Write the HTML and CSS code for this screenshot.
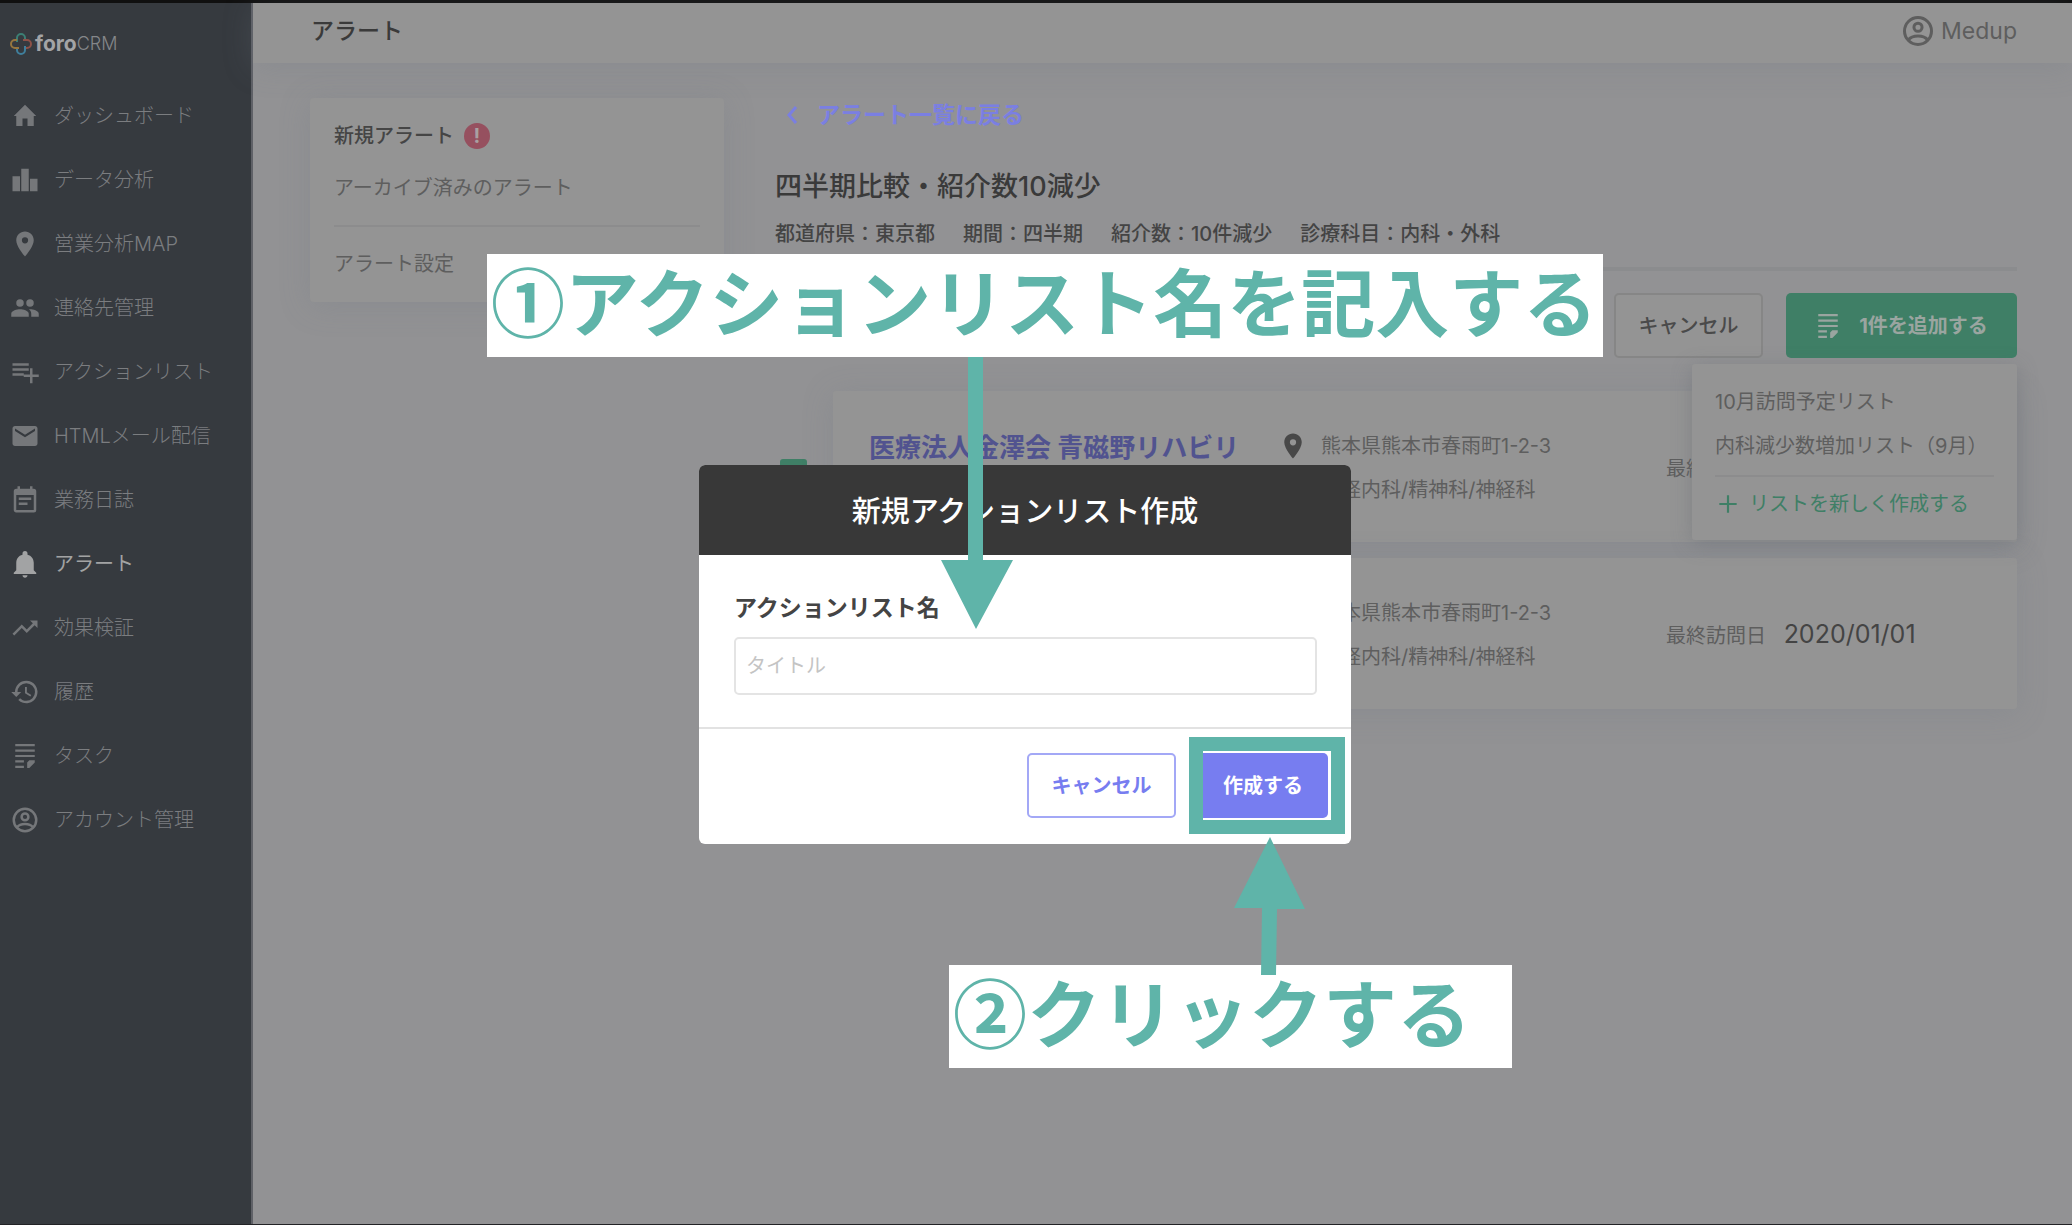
FILE: index.html
```html
<!DOCTYPE html>
<html lang="ja">
<head>
    <meta charset="UTF-8">
    <meta name="viewport" content="width=device-width, initial-scale=1.0">
    <title>アラート - foro CRM</title>
    <link rel="stylesheet" href="styles.css">
</head>
<body>
    <svg class="defs" aria-hidden="true">
        <symbol id="i-home" viewBox="0 0 24 24"><path d="M10 20v-6h4v6h5v-8h2L12 3 3 12h2v8z"/></symbol>
        <symbol id="i-chart" viewBox="0 0 24 24"><path d="M2 9h6v12H2zM9 3h6v18H9zM16 11h6v10h-6z"/></symbol>
        <symbol id="i-pin" viewBox="0 0 24 24"><path d="M12 2C8.13 2 5 5.13 5 9c0 5.25 7 13 7 13s7-7.75 7-13c0-3.87-3.13-7-7-7zm0 9.500a2.500 2.500 0 0 1 0-5 2.500 2.500 0 0 1 0 5z"/></symbol>
        <symbol id="i-people" viewBox="0 0 24 24"><path d="M16 11a3 3 0 1 0 0-6 3 3 0 0 0 0 6zM8 11a3 3 0 1 0 0-6 3 3 0 0 0 0 6zm0 2c-2.330 0-7 1.170-7 3.500V19h14v-2.500C15 14.170 10.330 13 8 13zm8 0c-.29 0-.62.02-.97.05 1.160.84 1.970 1.970 1.970 3.450V19h6v-2.500c0-2.330-4.670-3.500-7-3.500z"/></symbol>
        <symbol id="i-listadd" viewBox="0 0 24 24"><path d="M2 5h13v2H2zM2 9h13v2H2zM2 13h9v2H2zM16 9h2v5h5v2h-5v5h-2v-5h-5v-2h5z"/></symbol>
        <symbol id="i-mail" viewBox="0 0 24 24"><path d="M20 4H4c-1.100 0-2 .9-2 2v12c0 1.100.9 2 2 2h16c1.100 0 2-.9 2-2V6c0-1.100-.9-2-2-2zm0 4l-8 5-8-5V6l8 5 8-5v2z"/></symbol>
        <symbol id="i-note" viewBox="0 0 24 24"><path d="M19 3h-1V1h-2v2H8V1H6v2H5a2 2 0 0 0-2 2v15c0 1.100.9 2 2 2h14a2 2 0 0 0 2-2V5a2 2 0 0 0-2-2zm0 17H5V8h14zM7 10h10v2H7zM7 14h7v2H7z"/></symbol>
        <symbol id="i-bell" viewBox="0 0 24 24"><path d="M12 23c1.100 0 2-.9 2-2h-4c0 1.100.9 2 2 2zm7-6v-6c0-3.200-1.800-5.800-5-6.500V3.500a2 2 0 0 0-4 0v1C6.800 5.200 5 7.800 5 11v6l-2 2v1h18v-1z"/></symbol>
        <symbol id="i-trend" viewBox="0 0 24 24"><path d="M16 6l2.290 2.290-4.880 4.880-4-4L2 16.590 3.410 18l6-6 4 4 6.300-6.290L22 12V6z"/></symbol>
        <symbol id="i-history" viewBox="0 0 24 24"><path d="M13 3a9 9 0 0 0-9 9H1l4 4 4-4H6a7 7 0 1 1 7 7c-1.930 0-3.680-.79-4.940-2.060l-1.420 1.420A9 9 0 1 0 13 3zm-1 5v5l4.280 2.540.72-1.210-3.500-2.080V8z"/></symbol>
        <symbol id="i-task" viewBox="0 0 24 24"><path d="M3 1h18v2H3zM3 6h18v2H3zM3 11h18v2H3zM3 16h8v2H3zM3 21h8v2H3zM14 23v-5l2-2h5v2l-5 5z"/></symbol>
        <symbol id="i-user" viewBox="0 0 24 24"><g fill="none" stroke="currentColor" stroke-width="2"><circle cx="12" cy="12" r="9"/><circle cx="12" cy="9.500" r="2.700"/><path d="M5.500 18c1.500-2 4-2.700 6.500-2.700s5 .7 6.500 2.700"/></g></symbol>
        <symbol id="i-plus" viewBox="0 0 24 24"><path d="M11 4h2v7h7v2h-7v7h-2v-7H4v-2h7z"/></symbol>
        <symbol id="i-back" viewBox="0 0 24 24"><path d="M15 4L8 12l7 8" fill="none" stroke="currentColor" stroke-width="3"/></symbol>
    </svg>

    <div class="app">
        <aside class="sidebar">
            <a class="logo" href="#">
                <svg class="logo-mark" viewBox="0 0 24 24">
                    <path d="M8 10V6a4 4 0 0 1 8 0v2" stroke="#3c7f74"/>
                    <path d="M14 8h4a4 4 0 0 1 0 8h-2" stroke="#8d5148"/>
                    <path d="M16 14v4a4 4 0 0 1-8 0v-2" stroke="#3f7f9c"/>
                    <path d="M10 16H6a4 4 0 0 1 0-8h2" stroke="#96763f"/>
                </svg>
                <span class="logo-name">foro</span><span class="logo-sub">CRM</span>
            </a>
            <nav class="nav">
                <a href="#"><svg><use href="#i-home"/></svg>ダッシュボード</a>
                <a href="#"><svg><use href="#i-chart"/></svg>データ分析</a>
                <a href="#"><svg><use href="#i-pin"/></svg>営業分析MAP</a>
                <a href="#"><svg><use href="#i-people"/></svg>連絡先管理</a>
                <a href="#"><svg><use href="#i-listadd"/></svg>アクションリスト</a>
                <a href="#"><svg><use href="#i-mail"/></svg>HTMLメール配信</a>
                <a href="#"><svg><use href="#i-note"/></svg>業務日誌</a>
                <a href="#" class="active"><svg><use href="#i-bell"/></svg>アラート</a>
                <a href="#"><svg><use href="#i-trend"/></svg>効果検証</a>
                <a href="#"><svg><use href="#i-history"/></svg>履歴</a>
                <a href="#"><svg class="small"><use href="#i-task"/></svg>タスク</a>
                <a href="#"><svg><use href="#i-user"/></svg>アカウント管理</a>
            </nav>
        </aside>

        <div class="page">
            <header class="header">
                <h1>アラート</h1>
                <a class="user" href="#"><svg><use href="#i-user"/></svg>Medup</a>
            </header>

            <div class="content">
                <nav class="side-card">
                    <a href="#" class="current">新規アラート <span class="badge">!</span></a>
                    <a href="#">アーカイブ済みのアラート</a>
                    <hr>
                    <a href="#">アラート設定</a>
                </nav>

                <main class="main">
                    <a class="back" href="#"><svg><use href="#i-back"/></svg>アラート一覧に戻る</a>
                    <h2>四半期比較・紹介数10減少</h2>
                    <div class="conditions">
                        <span>都道府県：東京都</span>
                        <span>期間：四半期</span>
                        <span>紹介数：10件減少</span>
                        <span>診療科目：内科・外科</span>
                    </div>
                    <div class="toolbar">
                        <button class="btn-gray" type="button">キャンセル</button>
                        <div class="add">
                            <button class="btn-green" type="button"><svg><use href="#i-task"/></svg>1件を追加する</button>
                            <div class="dropdown">
                                <a href="#">10月訪問予定リスト</a>
                                <a href="#">内科減少数増加リスト（9月）</a>
                                <hr>
                                <a href="#" class="new-list"><svg><use href="#i-plus"/></svg>リストを新しく作成する</a>
                            </div>
                        </div>
                    </div>

                    <div class="row">
                        <input type="checkbox" aria-label="選択" checked>
                        <article class="card">
                            <a class="name" href="#">医療法人金澤会 青磁野リハビリ</a>
                            <div class="info">
                                <svg><use href="#i-pin"/></svg>
                                <p>熊本県熊本市春雨町1-2-3</p>
                                <p class="dept">神経内科/精神科/神経科</p>
                            </div>
                            <div class="visit">最終訪問日 <time>2020/01/01</time></div>
                        </article>
                    </div>
                    <div class="row">
                        <input type="checkbox" aria-label="選択">
                        <article class="card">
                            <a class="name" href="#">医療法人金澤会 青磁野リハビリ</a>
                            <div class="info">
                                <svg><use href="#i-pin"/></svg>
                                <p>熊本県熊本市春雨町1-2-3</p>
                                <p class="dept">神経内科/精神科/神経科</p>
                            </div>
                            <div class="visit">最終訪問日 <time>2020/01/01</time></div>
                        </article>
                    </div>
                </main>
            </div>
        </div>
    </div>

    <form class="modal" role="dialog" aria-labelledby="modal-title">
        <h2 id="modal-title">新規アクションリスト作成</h2>
        <div class="modal-body">
            <label for="list-name">アクションリスト名</label>
            <input id="list-name" type="text" placeholder="タイトル">
        </div>
        <div class="modal-footer">
            <button class="btn-outline" type="button">キャンセル</button>
            <button class="btn-primary" type="button">作成する</button>
        </div>
    </form>

    <!-- 説明用の注釈 -->
    <div class="callout callout-1">①アクションリスト名を記入する</div>
    <svg class="arrow arrow-1" viewBox="0 0 72 272"><path d="M27 0h15v203h30L35 272 0 203h27z"/></svg>
    <div class="frame"></div>
    <div class="callout callout-2">②クリックする</div>
    <svg class="arrow arrow-2" viewBox="0 0 72 138"><path d="M36 0l35 72H43l-1 66H27l1-67H0z"/></svg>
</body>
</html>
```

FILE: styles.css
```css
* {
    box-sizing: border-box;
}
body {
    margin: 0;
    background: #929294;
    font-family: Inter, 'Noto Sans CJK JP', sans-serif;
    font-size: 20px;
    line-height: 30px;
    color: #5e5e5e;
}
a {
    color: inherit;
    text-decoration: none;
}
h1, h2, p {
    margin: 0;
}
button, input {
    font: inherit;
    margin: 0;
}
svg {
    fill: currentColor;
    flex: none;
}
.defs {
    position: absolute;
    width: 0;
    height: 0;
}
.app {
    display: flex;
    min-height: 100vh;
    border-top: 3px solid #101010;
    border-bottom: 1px solid #222326;
}

/* sidebar */
.sidebar {
    width: 253px;
    flex: none;
    background: #363a3f;
    border-right: 2px solid #5f6167;
}
.logo {
    display: flex;
    align-items: center;
    height: 81px;
    padding-left: 9px;
    color: #a3a4a6;
}
.logo-mark {
    width: 24px;
    height: 24px;
    margin-right: 2px;
    fill: none;
    stroke-width: 2px;
}
.logo-name {
    font-size: 21px;
    font-weight: 700;
}
.logo-sub {
    font-size: 18px;
    font-weight: 300;
    color: #85878a;
}
.nav a {
    display: flex;
    align-items: center;
    height: 64px;
    padding-left: 10px;
    gap: 14px;
    font-weight: 300;
    color: #7b7d80;
}
.nav svg {
    width: 30px;
    height: 30px;
    color: #75777a;
}
.nav svg.small {
    padding: 2px;
}
.nav a.active, .nav .active svg {
    color: #a2a3a4;
    font-weight: 400;
}

/* header */
.page {
    flex: 1;
    min-width: 0;
}
.header {
    display: flex;
    align-items: center;
    justify-content: space-between;
    height: 60px;
    padding: 0 55px 4px 58px;
    background: #949494;
    box-shadow: 0 4px 30px rgba(110, 118, 130, 0.25);
}
.header h1 {
    font-size: 23px;
    font-weight: 500;
    color: #3a3a3a;
}
.user {
    display: flex;
    align-items: center;
    gap: 5px;
    font-size: 23px;
}
.user svg {
    width: 36px;
    height: 36px;
}

.content {
    display: flex;
    align-items: flex-start;
    gap: 51px;
    padding: 35px 55px 35px 57px;
}
hr {
    width: 100%;
    height: 2px;
    margin: 0;
    border: 0;
    background: #8c8c8d;
}
.side-card {
    display: flex;
    flex-direction: column;
    gap: 22px;
    width: 414px;
    flex: none;
    padding: 23px 24px;
    border-radius: 4px;
    background: #949494;
    box-shadow: 0 4px 30px rgba(110, 118, 130, 0.25);
}
.side-card .current {
    display: flex;
    align-items: center;
    gap: 10px;
    font-weight: 500;
    color: #454545;
}
.badge {
    width: 26px;
    height: 26px;
    border-radius: 50%;
    background: #96505f;
    color: #a9a0a2;
    font-weight: 700;
    line-height: 26px;
    text-align: center;
}

/* alert detail */
.main {
    flex: 1;
    min-width: 0;
}
.back {
    display: flex;
    align-items: center;
    gap: 12px;
    height: 34px;
    padding-left: 6px;
    font-size: 23px;
    font-weight: 700;
    color: #7a7fe2;
}
.back svg {
    width: 24px;
    height: 24px;
}
.main h2 {
    margin-top: 37px;
    font-size: 27px;
    font-weight: 500;
    line-height: 36px;
    color: #3a3a3a;
}
.conditions {
    display: flex;
    gap: 28px;
    margin-top: 14px;
    padding-bottom: 18px;
    border-bottom: 4px solid #8b8c8e;
    font-weight: 500;
    color: #444;
}
.toolbar {
    display: flex;
    justify-content: flex-end;
    gap: 23px;
    margin: 22px 0 33px;
}
.btn-gray, .btn-green {
    display: flex;
    align-items: center;
    justify-content: center;
    height: 65px;
    border-radius: 5px;
}
.btn-gray {
    width: 149px;
    background: #949494;
    border: 2px solid #868686;
    font-weight: 500;
    color: #4a4a4a;
}
.add {
    position: relative;
    width: 231px;
}
.btn-green {
    width: 100%;
    gap: 18px;
    padding: 0;
    background: #3f7f66;
    border: 0;
    font-weight: 700;
    color: #9aa5a0;
}
.btn-green svg {
    width: 26px;
    height: 26px;
}
.dropdown {
    position: absolute;
    top: 71px;
    right: 0;
    z-index: 1;
    width: 325px;
    padding: 16px 23px 14px;
    border-radius: 3px;
    background: #949494;
    box-shadow: 0 4px 20px rgba(100, 104, 112, 0.4);
}
.dropdown a {
    display: block;
    line-height: 44px;
    white-space: nowrap;
}
.dropdown hr {
    margin: 7px 0 5px;
}
.dropdown .new-list {
    display: flex;
    align-items: center;
    gap: 8px;
    height: 44px;
    color: #3f7f66;
}
.new-list svg {
    width: 26px;
    height: 26px;
}
.row {
    display: flex;
    align-items: center;
    gap: 26px;
    margin-bottom: 16px;
    padding-left: 5px;
}
.row input {
    appearance: none;
    width: 27px;
    height: 16px;
    flex: none;
    border: 2px solid #777;
    border-radius: 3px;
}
.row input:checked {
    border: 0;
    background: #3f7f66;
}
.card {
    flex: 1;
    display: grid;
    grid-template-columns: 409fr 388fr 315fr;
    align-items: center;
    height: 151px;
    padding: 2px 36px 0;
    background: #949494;
    border-radius: 3px;
    box-shadow: 0 4px 30px rgba(110, 118, 130, 0.25);
}
.name {
    margin-bottom: 40px;
    font-size: 26px;
    font-weight: 700;
    white-space: nowrap;
    color: #51538f;
}
.info {
    display: grid;
    grid-template-columns: 32px 1fr;
    column-gap: 11px;
    row-gap: 14px;
    white-space: nowrap;
}
.info svg {
    width: 30px;
    height: 30px;
    color: #484848;
}
.info .dept {
    grid-column: 2;
}
.visit time {
    margin-left: 12px;
    font-size: 25px;
    color: #444;
}

/* modal */
.modal {
    position: absolute;
    top: 465px;
    left: 699px;
    z-index: 2;
    width: 652px;
    border-radius: 6px;
    background: #fff;
    overflow: hidden;
}
.modal h2 {
    padding-top: 4px;
    background: #383838;
    color: #fff;
    font-size: 29px;
    font-weight: 500;
    line-height: 86px;
    text-align: center;
}
.modal-body {
    padding: 36px 34px 32px 35px;
    border-bottom: 2px solid #e2e2e2;
}
.modal-body label {
    display: block;
    margin-bottom: 12px;
    font-size: 23px;
    line-height: 34px;
    font-weight: 700;
    color: #444;
}
.modal-body input {
    display: block;
    width: 100%;
    height: 58px;
    padding: 0 10px;
    border: 2px solid #e4e4e4;
    border-radius: 5px;
}
.modal-body input::placeholder {
    color: #c4c4c4;
}
.modal-footer {
    display: flex;
    justify-content: flex-end;
    gap: 22px;
    padding: 24px 23px 26px;
}
.modal-footer button {
    height: 65px;
    padding: 0;
    border-radius: 5px;
    font-weight: 700;
}
.btn-outline {
    width: 149px;
    border: 2px solid #a3a8f6;
    background: #fff;
    color: #777df0;
}
.btn-primary {
    width: 130px;
    border: 0;
    background: #777df0;
    color: #fff;
}

/* annotations */
.callout, .arrow, .frame {
    position: absolute;
    z-index: 3;
}
.callout {
    height: 103px;
    padding-left: 4px;
    background: #fff;
    color: #5fb4a9;
    font-family: 'Noto Sans CJK JP', sans-serif;
    font-size: 74px;
    font-weight: 700;
    line-height: 90px;
    white-space: nowrap;
}
.callout-1 {
    top: 254px;
    left: 487px;
    width: 1116px;
}
.callout-2 {
    top: 965px;
    left: 949px;
    width: 563px;
}
.arrow {
    fill: #5fb4a9;
    width: 72px;
}
.arrow-1 {
    top: 357px;
    left: 941px;
    height: 272px;
}
.arrow-2 {
    top: 837px;
    left: 1234px;
    height: 138px;
}
.frame {
    top: 737px;
    left: 1189px;
    width: 156px;
    height: 97px;
    border: 14px solid #5fb4a9;
}
```
